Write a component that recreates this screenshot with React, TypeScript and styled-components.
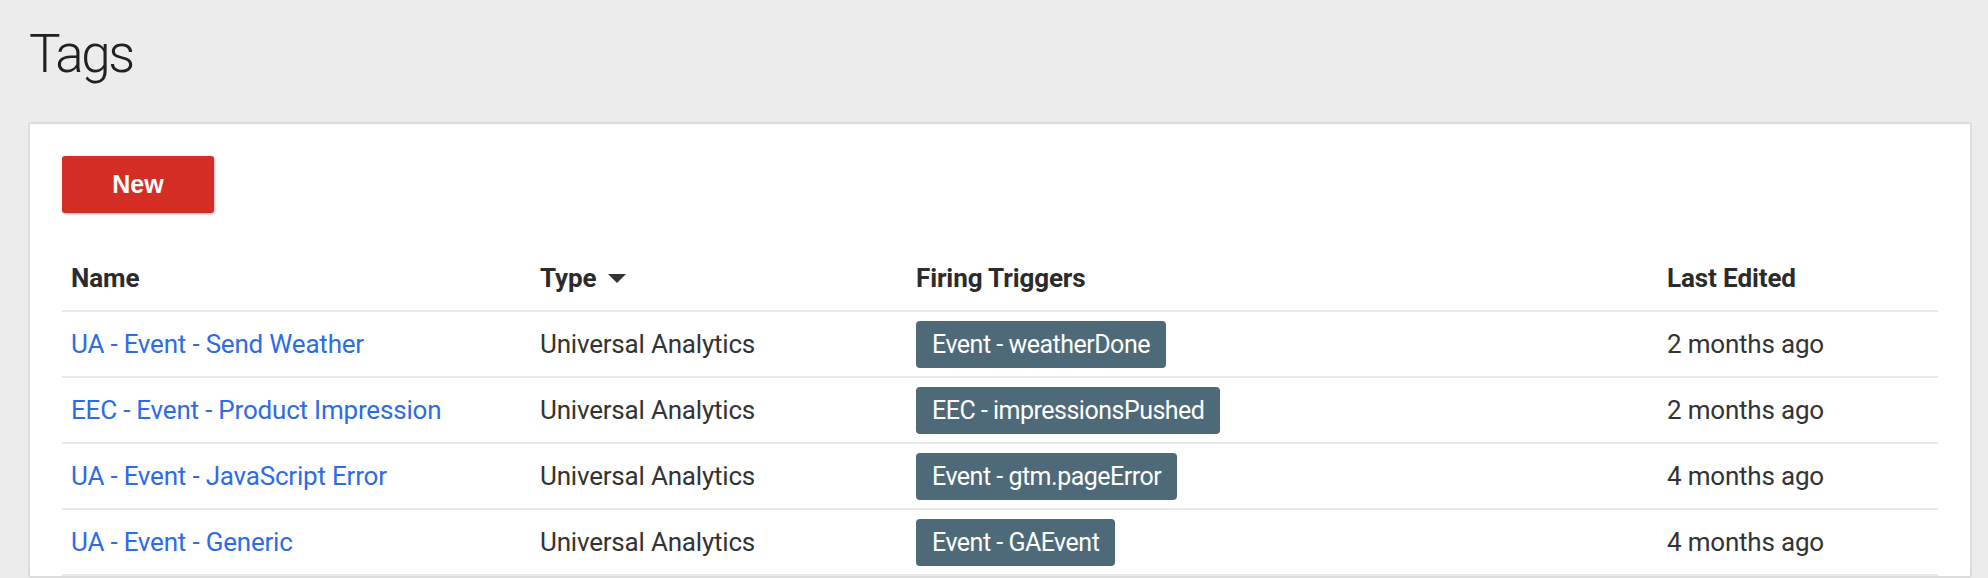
import styled, { createGlobalStyle } from "styled-components";

const GlobalStyle = createGlobalStyle`
  html, body {
    margin: 0;
    padding: 0;
    background: #ececec;
  }
  body {
    font-family: Roboto, "Liberation Sans", Arial, sans-serif;
    color: #333;
  }
`;

const Page = styled.div`
  padding: 28px 16px 0 28px;
`;

const Title = styled.h1`
  margin: 0 0 41px 1px;
  font-size: 53px;
  line-height: 53px;
  font-weight: 300;
  letter-spacing: -2.4px;
  color: #212121;
`;

const Card = styled.div`
  background: #fff;
  border: 2px solid #dcdcdc;
  border-radius: 3px;
  padding: 32px 32px 0 32px;
`;

const NewButton = styled.button`
  width: 152px;
  height: 57px;
  border: none;
  border-radius: 3px;
  background: #d32d26;
  color: #fff;
  font-family: "Liberation Sans", Arial, sans-serif;
  font-weight: 700;
  font-size: 25px;
  box-shadow: 1px 1px 3px rgba(0, 0, 0, 0.3);
  cursor: pointer;
`;

const Table = styled.div`
  margin-top: 33px;
  display: grid;
  grid-template-columns: 469px 376px 751px 1fr;
`;

const Cell = styled.div<{ $head?: boolean }>`
  height: 64px;
  padding-left: 9px;
  display: flex;
  align-items: center;
  border-bottom: 2px solid #e8e8e8;
  font-size: 26px;
  letter-spacing: ${(p) => (p.$head ? "-0.1px" : "-0.2px")};
  font-weight: ${(p) => (p.$head ? 700 : 400)};
  color: ${(p) => (p.$head ? "#2b2b2b" : "#333")};
  white-space: nowrap;
`;

const SortArrow = styled.span`
  display: inline-block;
  margin-left: 12px;
  width: 0;
  height: 0;
  border-left: 9.5px solid transparent;
  border-right: 9.5px solid transparent;
  border-top: 9.5px solid #333;
`;

const TagLink = styled.a`
  color: #2e6be6;
  text-decoration: none;
`;

const Chip = styled.span`
  display: inline-flex;
  align-items: center;
  height: 47px;
  padding: 0 16px;
  border-radius: 4px;
  background: #4e6a79;
  color: #fff;
  font-size: 25px;
  letter-spacing: -0.5px;
`;

const tags = [
  { name: "UA - Event - Send Weather", type: "Universal Analytics", trigger: "Event - weatherDone", edited: "2 months ago" },
  { name: "EEC - Event - Product Impression", type: "Universal Analytics", trigger: "EEC - impressionsPushed", edited: "2 months ago" },
  { name: "UA - Event - JavaScript Error", type: "Universal Analytics", trigger: "Event - gtm.pageError", edited: "4 months ago" },
  { name: "UA - Event - Generic", type: "Universal Analytics", trigger: "Event - GAEvent", edited: "4 months ago" },
];

const App = () => {
  return (
    <>
      <GlobalStyle />
      <Page>
        <Title>Tags</Title>
        <Card>
          <NewButton>New</NewButton>
          <Table>
            <Cell $head>Name</Cell>
            <Cell $head>
              Type
              <SortArrow />
            </Cell>
            <Cell $head>Firing Triggers</Cell>
            <Cell $head>Last Edited</Cell>
            {tags.map((t) => (
              <>
                <Cell key={t.name + "n"}>
                  <TagLink href="#">{t.name}</TagLink>
                </Cell>
                <Cell key={t.name + "t"}>{t.type}</Cell>
                <Cell key={t.name + "f"}>
                  <Chip>{t.trigger}</Chip>
                </Cell>
                <Cell key={t.name + "e"}>{t.edited}</Cell>
              </>
            ))}
          </Table>
        </Card>
      </Page>
    </>
  );
};

export default App;
